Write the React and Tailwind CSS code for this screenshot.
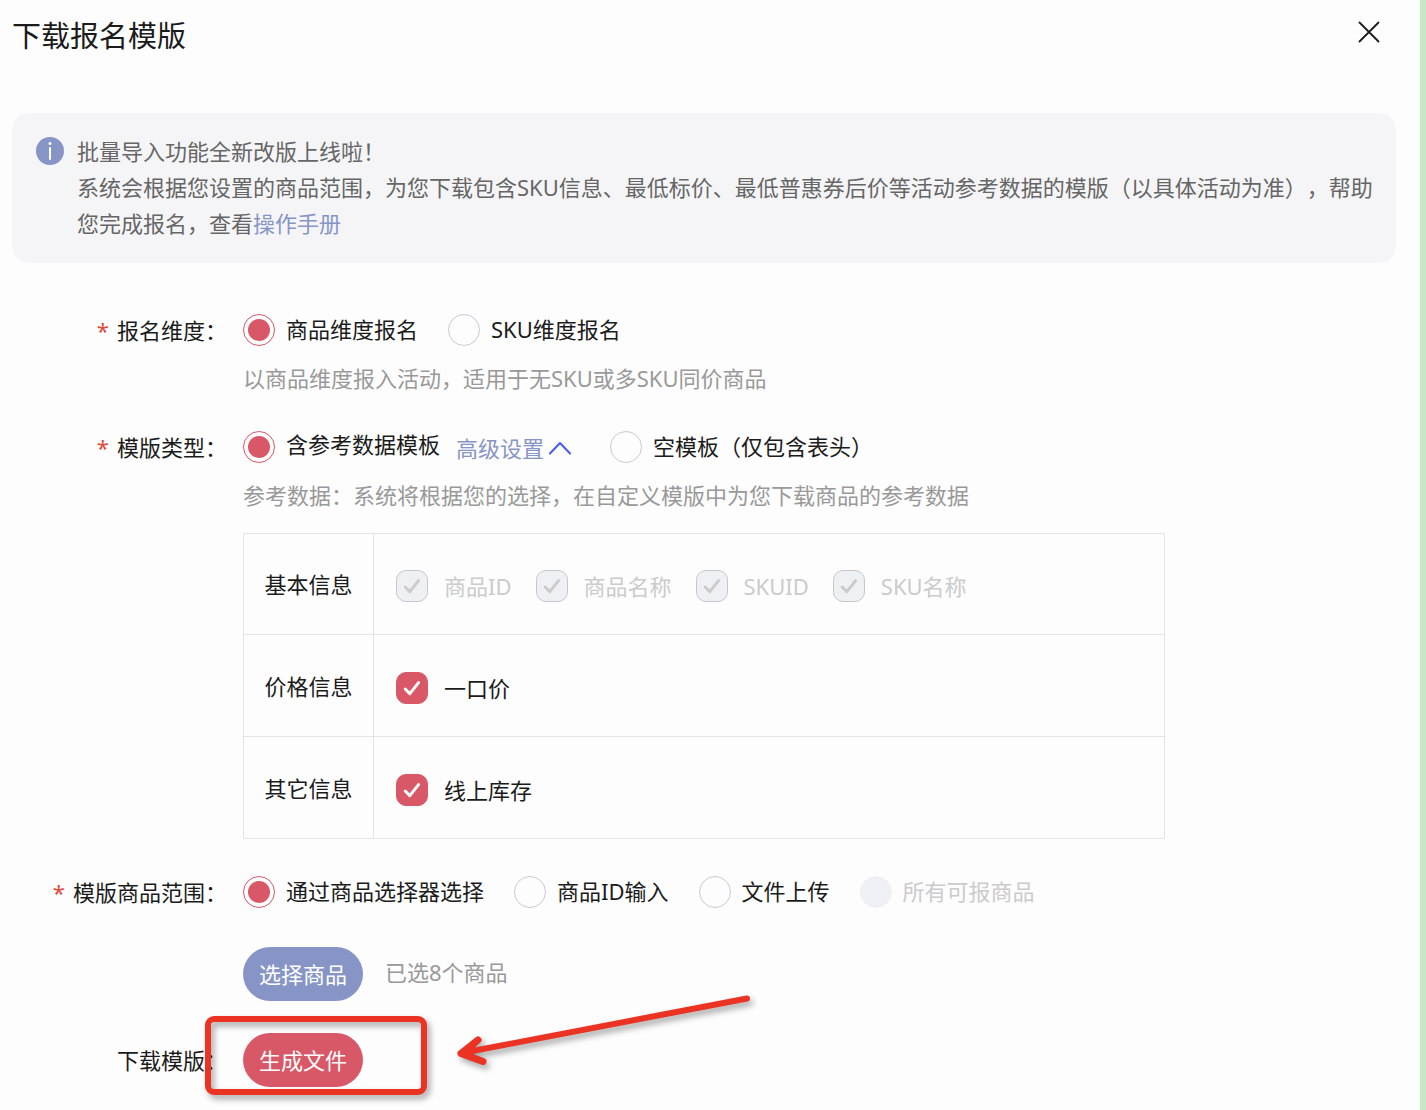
import { useState } from 'react'
import clsx from 'clsx'

const DIMENSIONS = [
  { value: 'item', label: '商品维度报名' },
  { value: 'sku', label: 'SKU维度报名' },
]

const SCOPES = [
  { value: 'picker', label: '通过商品选择器选择' },
  { value: 'id', label: '商品ID输入' },
  { value: 'file', label: '文件上传' },
  { value: 'all', label: '所有可报商品', disabled: true },
]

const FIELD_GROUPS = [
  {
    title: '基本信息',
    fields: [
      { key: 'itemId', label: '商品ID', disabled: true },
      { key: 'itemName', label: '商品名称', disabled: true },
      { key: 'skuId', label: 'SKUID', disabled: true },
      { key: 'skuName', label: 'SKU名称', disabled: true },
    ],
  },
  { title: '价格信息', fields: [{ key: 'price', label: '一口价' }] },
  { title: '其它信息', fields: [{ key: 'stock', label: '线上库存' }] },
]

const Radio = ({ name, value, label, checked, disabled, onChange, labelClass = 'pb-[2px]' }) => (
  <label className={clsx('flex h-8 items-center gap-[11px]', disabled ? 'text-[#cbcbcb]' : 'text-[#1b1b1b]')}>
    <input
      type="radio"
      name={name}
      value={value}
      checked={checked}
      disabled={disabled}
      onChange={() => onChange(value)}
      className="grid size-8 shrink-0 appearance-none place-items-center rounded-full border border-[#c9cad6] before:size-[22px] before:rounded-full checked:border-[#d95868] checked:before:bg-[#d95868] disabled:border-[#eef0f5] disabled:bg-[#eef0f5]"
    />
    <span className={labelClass}>{label}</span>
  </label>
)

const Checkbox = ({ label, checked, disabled, onChange }) => (
  <label className={clsx('flex h-8 items-center gap-4', disabled ? 'text-[#cbcbcb]' : 'text-[#1b1b1b]')}>
    <span className="relative size-8 shrink-0">
      <input
        type="checkbox"
        checked={checked}
        disabled={disabled}
        onChange={onChange}
        className="block size-8 appearance-none rounded-[10px] border border-[#c9cad6] checked:border-[#d95868] checked:bg-[#d95868] disabled:border-[#c4c6d2] disabled:bg-[#eff0f4]"
      />
      {checked && (
        <svg
          viewBox="0 0 32 32"
          className={clsx('pointer-events-none absolute inset-0', disabled ? 'text-[#cbcbcb]' : 'text-white')}
          fill="none"
          stroke="currentColor"
          strokeWidth="3"
          strokeLinecap="round"
          strokeLinejoin="round"
        >
          <path d="M9.2 17 L13.8 21.6 L22.6 10.6" />
        </svg>
      )}
    </span>
    <span>{label}</span>
  </label>
)

const FormRow = ({ label, required, center, children }) => (
  <div className={clsx('flex gap-4', center ? 'items-center' : 'items-start')}>
    <div className="w-[215px] shrink-0 text-right text-[#1b1b1b]">
      {required && <span className="mr-2 text-[#dc4a3a]">*</span>}
      {label}：
    </div>
    <div className="min-w-0 flex-1">{children}</div>
  </div>
)

export default function App() {
  const [dimension, setDimension] = useState('item')
  const [template, setTemplate] = useState('reference')
  const [scope, setScope] = useState('picker')
  const [showAdvanced, setShowAdvanced] = useState(true)
  const [fields, setFields] = useState({
    itemId: true,
    itemName: true,
    skuId: true,
    skuName: true,
    price: true,
    stock: true,
  })

  const toggleField = (key) => setFields((prev) => ({ ...prev, [key]: !prev[key] }))

  return (
    <main
      lang="zh-CN"
      className="min-h-screen overflow-hidden border-r-[6px] border-[#c6e8c6] bg-[#fdfdfd] pr-6 pb-[23px] pl-3 font-['Noto_Sans','Noto_Sans_CJK_SC',sans-serif] text-[22px] leading-8 [text-spacing-trim:space-all]"
    >
      {/* Header */}
      <header className="flex items-start justify-between pt-4 pr-4">
        <h1 className="text-[29px] leading-10 text-[#1b1b1b]">下载报名模版</h1>
        <button type="button" aria-label="关闭" className="mt-[5px]">
          <svg viewBox="0 0 22 22" className="size-[22px]" fill="none" stroke="#1b1b1b" strokeWidth="1.8" strokeLinecap="round">
            <path d="M1.5 1.5 L20.5 20.5 M20.5 1.5 L1.5 20.5" />
          </svg>
        </button>
      </header>

      {/* Notice */}
      <section className="mt-[57px] flex gap-[13px] rounded-[16px] bg-[#f5f5f7] pt-5 pr-4 pb-[22px] pl-6">
        <svg viewBox="0 0 28 28" className="mt-1 size-7 shrink-0">
          <circle cx="14" cy="14" r="14" fill="#8795c6" />
          <circle cx="14" cy="6.6" r="1.5" fill="#fff" />
          <path d="M14 11 V22" stroke="#fff" strokeWidth="2" strokeLinecap="round" />
        </svg>
        <div className="leading-9 text-[#666]">
          <p>批量导入功能全新改版上线啦！</p>
          <p>
            系统会根据您设置的商品范围，为您下载包含SKU信息、最低标价、最低普惠券后价等活动参考数据的模版（以具体活动为准），帮助您完成报名，查看
            <a href="#manual" className="text-[#8795c6]">操作手册</a>
          </p>
        </div>
      </section>

      <form className="mt-[51px]" onSubmit={(e) => e.preventDefault()}>
        <FormRow label="报名维度" required>
          <div className="flex flex-wrap gap-x-[30px]">
            {DIMENSIONS.map((item) => (
              <Radio key={item.value} name="dimension" {...item} checked={dimension === item.value} onChange={setDimension} />
            ))}
          </div>
          <p className="mt-4 text-[#999]">以商品维度报入活动，适用于无SKU或多SKU同价商品</p>
        </FormRow>

        <div className="mt-[37px]">
          <FormRow label="模版类型" required>
            <div className="flex flex-wrap items-center">
              <Radio
                name="template"
                value="reference"
                label="含参考数据模板"
                labelClass="pb-[6px]"
                checked={template === 'reference'}
                onChange={setTemplate}
              />
              <button
                type="button"
                onClick={() => setShowAdvanced(!showAdvanced)}
                className="ml-4 flex h-8 items-center gap-1 pt-px text-[#8795c6]"
              >
                高级设置
                <svg
                  viewBox="0 0 24 14"
                  className={clsx('h-[14px] w-6', !showAdvanced && 'rotate-180')}
                  fill="none"
                  stroke="#4a5cf0"
                  strokeWidth="2"
                  strokeLinecap="round"
                  strokeLinejoin="round"
                >
                  <path d="M2 12.5 L12 2 L22 12.5" />
                </svg>
              </button>
              <div className="ml-[38px]">
                <Radio
                  name="template"
                  value="empty"
                  label="空模板（仅包含表头）"
                  checked={template === 'empty'}
                  onChange={setTemplate}
                />
              </div>
            </div>
            <p className="mt-4 text-[#999]">参考数据：系统将根据您的选择，在自定义模版中为您下载商品的参考数据</p>

            {showAdvanced && (
              <table className="mt-[22px] w-full max-w-[922px] border-collapse">
                <tbody>
                  {FIELD_GROUPS.map((group) => (
                    <tr key={group.title} className="h-[102px] first:h-[101px]">
                      <th scope="row" className="w-[130px] border border-[#e3e4e8] text-center font-normal text-[#1b1b1b]">
                        {group.title}
                      </th>
                      <td className="border border-[#e3e4e8] px-[22px] pt-1">
                        <div className="flex flex-wrap gap-x-6">
                          {group.fields.map((field) => (
                            <Checkbox
                              key={field.key}
                              label={field.label}
                              disabled={field.disabled}
                              checked={fields[field.key]}
                              onChange={() => toggleField(field.key)}
                            />
                          ))}
                        </div>
                      </td>
                    </tr>
                  ))}
                </tbody>
              </table>
            )}
          </FormRow>
        </div>

        <div className="mt-[37px]">
          <FormRow label="模版商品范围" required>
            <div className="flex flex-wrap gap-x-[30px]">
              {SCOPES.map((item) => (
                <Radio key={item.value} name="scope" {...item} checked={scope === item.value} onChange={setScope} />
              ))}
            </div>
            <div className="mt-[39px] flex items-center gap-[22px]">
              <button type="button" className="h-[54px] w-[120px] rounded-full bg-[#8795c6] text-white">
                选择商品
              </button>
              <span className="pb-1 text-[#999]">已选8个商品</span>
            </div>
          </FormRow>
        </div>

        <div className="relative mt-8">
          <FormRow label="下载模版" center>
            <button type="submit" className="block h-[54px] w-[120px] rounded-full bg-[#d95868] text-white">
              生成文件
            </button>
          </FormRow>

          {/* Highlight frame and arrow drawn over the row */}
          <svg
            viewBox="0 0 570 120"
            className="pointer-events-none absolute -top-11 left-[183px] h-[120px] w-[570px] drop-shadow-[3px_4px_3px_rgba(0,0,0,0.35)]"
            fill="none"
            stroke="#ea3323"
            strokeWidth="6"
            strokeLinecap="round"
            strokeLinejoin="round"
          >
            <rect x="13" y="30" width="216" height="73" rx="6" />
            <path d="M552 9.500 L267 64" />
            <path d="M283 51 L266 64.500 L288 72.500 L270 65 Z" />
            <path d="M283 51 L266 64.500 L288 72.500" strokeWidth="7" />
          </svg>
        </div>
      </form>
    </main>
  )
}
